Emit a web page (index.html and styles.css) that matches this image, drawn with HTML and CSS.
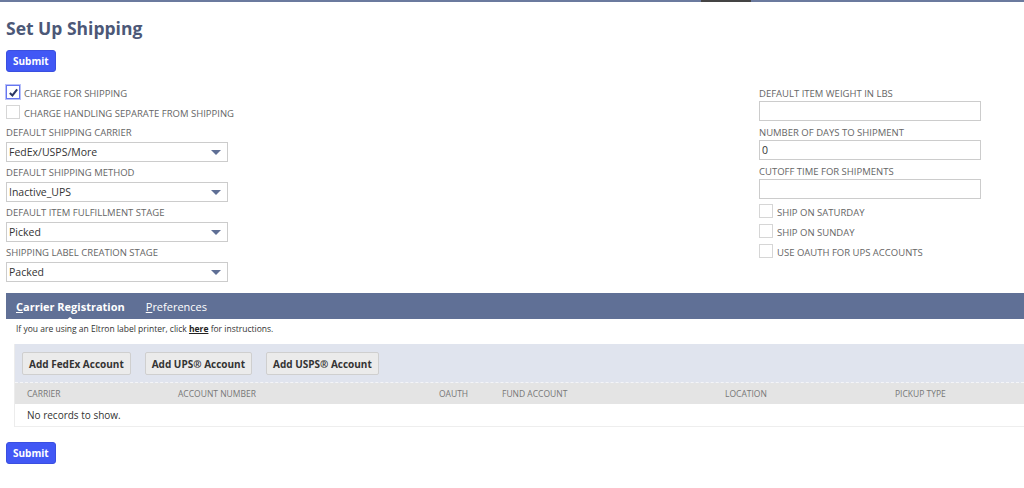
FILE: index.html
```html
<!DOCTYPE html>
<html>
    <head>
        <title>Set Up Shipping</title>
        <link rel="stylesheet" href="styles.css">
    </head>
    <body>
        <div class="topline"><span></span></div>
        <div id="page">
            <h1>Set Up Shipping</h1>
            <button class="submit">Submit</button>

            <div class="form">
                <div class="col">
                    <label class="check"><span class="box checked"><svg viewBox="0 0 12 12" width="11" height="11"><path d="M2 6.5 L4.8 9.2 L10 2.5" fill="none" stroke="#2b3766" stroke-width="2.2"/></svg></span><span>Charge for Shipping</span></label>
                    <label class="check"><span class="box"></span><span>Charge Handling Separate from Shipping</span></label>

                    <div class="field first">
                        <div class="label">Default Shipping Carrier</div>
                        <div class="select">FedEx/USPS/More<i></i></div>
                    </div>
                    <div class="field">
                        <div class="label">Default Shipping Method</div>
                        <div class="select">Inactive_UPS<i></i></div>
                    </div>
                    <div class="field">
                        <div class="label">Default Item Fulfillment Stage</div>
                        <div class="select">Picked<i></i></div>
                    </div>
                    <div class="field">
                        <div class="label">Shipping Label Creation Stage</div>
                        <div class="select">Packed<i></i></div>
                    </div>
                </div>

                <div class="col right">
                    <div class="field">
                        <div class="label">Default Item Weight in LBS</div>
                        <div class="input"></div>
                    </div>
                    <div class="field">
                        <div class="label">Number of Days to Shipment</div>
                        <div class="input">0</div>
                    </div>
                    <div class="field">
                        <div class="label">Cutoff Time for Shipments</div>
                        <div class="input"></div>
                    </div>
                    <div class="checks">
                        <label class="check"><span class="box"></span><span>Ship on Saturday</span></label>
                        <label class="check"><span class="box"></span><span>Ship on Sunday</span></label>
                        <label class="check"><span class="box"></span><span>Use OAuth for UPS Accounts</span></label>
                    </div>
                </div>
            </div>

            <div class="tabs">
                <span class="tab active"><u>C</u>arrier Registration</span>
                <span class="tab"><u>P</u>references</span>
            </div>
            <p class="note">If you are using an Eltron label printer, click <a>here</a> for instructions.</p>

            <div class="sublist">
                <div class="actions">
                    <button>Add FedEx Account</button>
                    <button>Add UPS® Account</button>
                    <button>Add USPS® Account</button>
                </div>
                <div class="row head">
                    <span>Carrier</span>
                    <span>Account Number</span>
                    <span>OAuth</span>
                    <span>Fund Account</span>
                    <span>Location</span>
                    <span>Pickup Type</span>
                </div>
                <div class="row empty">No records to show.</div>
            </div>

            <button class="submit">Submit</button>
        </div>
    </body>
</html>
```

FILE: styles.css
```css
html, body {
    margin: 0;
    background: #fff;
    font-family: "Open Sans", "Liberation Sans", sans-serif;
    color: #333;
    overflow: hidden;
}

.topline {
    height: 2px;
    background: #6b7a9e;
    position: relative;
}
    .topline span {
        position: absolute;
        left: 701px;
        width: 50px;
        height: 2px;
        background: #444;
    }

#page {
    padding-left: 6px;
}

h1 {
    margin: 14px 0 10px;
    font-size: 17.5px;
    line-height: 24px;
    color: #4c5877;
    font-weight: bold;
}

button {
    font-family: inherit;
    cursor: pointer;
}

.submit {
    display: block;
    height: 22px;
    padding: 0 6px;
    background: #4158f5;
    border: 1px solid #3a4fe0;
    border-radius: 3px;
    color: #fff;
    font-size: 10px;
    font-weight: bold;
}

.form {
    display: grid;
    grid-template-columns: 753px 222px;
    margin-top: 13px;
}

.col {
    width: 222px;
    display: flex;
    flex-direction: column;
}

.col.right {
    padding-top: 2px;
}

.check {
    display: flex;
    align-items: center;
    height: 14px;
    margin-bottom: 6px;
    font-size: 9.5px;
    text-transform: uppercase;
    color: #666;
    white-space: nowrap;
}

    .check .box {
        width: 12px;
        height: 12px;
        border: 1px solid #d6d6d6;
        margin-right: 4px;
        display: flex;
        align-items: center;
        justify-content: center;
        flex: none;
    }

    .check .box + span {
        padding-top: 3px;
    }

    .check .box.checked {
        border: 1px solid #6676f0;
        box-shadow: 0 0 0 1px #b8c0f8;
    }

.field.first {
    margin-top: 1px;
}

.label {
    height: 14px;
    line-height: 14px;
    font-size: 9.5px;
    text-transform: uppercase;
    color: #666;
    white-space: nowrap;
    margin-bottom: 2px;
}

.select, .input {
    position: relative;
    box-sizing: border-box;
    height: 20px;
    line-height: 18px;
    border: 1px solid #ccc;
    padding: 0 2px;
    font-size: 10.5px;
    color: #333;
    margin-bottom: 4px;
}

    .select i {
        position: absolute;
        right: 6px;
        top: 7px;
        width: 0;
        height: 0;
        border-left: 5px solid transparent;
        border-right: 5px solid transparent;
        border-top: 5px solid #5f6f95;
    }

.right .label {
    margin-bottom: 0;
}

.right .select, .right .input {
    margin-bottom: 5px;
}

.right .checks {
    margin-top: 0;
}

.tabs {
    margin-top: 7px;
    height: 26px;
    background: #607096;
    display: flex;
    align-items: center;
    padding-left: 10px;
    gap: 21px;
}

    .tab {
        position: relative;
        color: #fff;
        font-size: 11px;
    }

    .tab.active {
        font-weight: bold;
    }

    .tab.active::after {
        content: "";
        position: absolute;
        left: 50%;
        bottom: -8px;
        margin-left: -6px;
        border-left: 6px solid transparent;
        border-right: 6px solid transparent;
        border-bottom: 5px solid #fff;
    }

.note {
    margin: 2px 0 7px 10px;
    height: 16px;
    line-height: 16px;
    font-size: 8.5px;
    color: #333;
}

    .note a {
        font-weight: bold;
        text-decoration: underline;
        color: #222;
    }

.sublist {
    margin-left: 8px;
    border-left: 1px solid #ececec;
}

.actions {
    background: #e0e4ee;
    padding: 8px 7px 7px;
    display: flex;
    gap: 14px;
    border-bottom: 1px dashed #f4f5f8;
}

    .actions button {
        height: 23px;
        padding: 0 6px;
        background: #ebebeb;
        border: 1px solid #cfcfcf;
        border-radius: 2px;
        font-size: 10px;
        font-weight: bold;
        color: #333;
    }

.row {
    display: grid;
    grid-template-columns: 151px 261px 63px 223px 170px 1fr;
    padding-left: 12px;
    align-items: center;
}

.row.head {
    height: 21px;
    background: #e4e4e4;
    font-size: 8.5px;
    text-transform: uppercase;
    color: #777;
}

.row.empty {
    display: block;
    height: 22px;
    line-height: 22px;
    font-size: 10px;
    border-bottom: 1px solid #eee;
}

.sublist + .submit {
    margin-top: 15px;
}
```
